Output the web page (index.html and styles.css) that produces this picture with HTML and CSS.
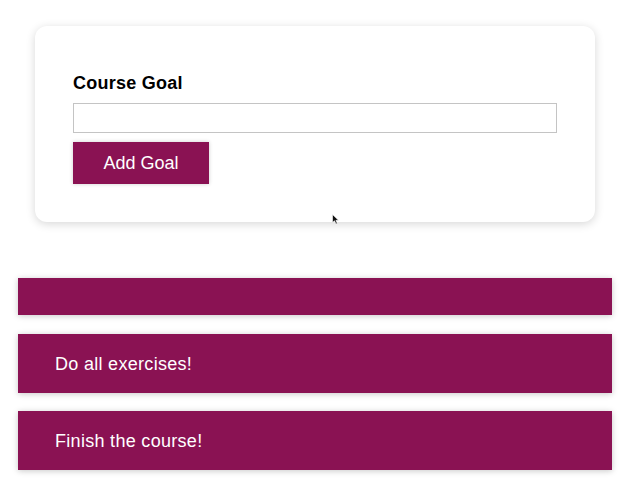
FILE: index.html
```html
<!DOCTYPE html>
<html>
<head>
<meta charset="utf-8">
<link rel="stylesheet" href="styles.css">
</head>
<body>
<section class="goal-form">
  <form class="form">
    <label class="form-label">Course Goal</label>
    <input class="form-input" type="text">
    <button class="button" type="button">Add Goal</button>
  </form>
</section>
<section class="goals">
  <ul class="goal-list">
    <li class="goal-item"></li>
    <li class="goal-item">Do all exercises!</li>
    <li class="goal-item">Finish the course!</li>
  </ul>
</section>
<svg class="cursor" width="8" height="11" viewBox="0 0 8 11"><path d="M0.5 0.5 L0.5 8.5 L2.5 6.8 L4 10 L5.3 9.4 L3.9 6.3 L6.5 6.3 Z" fill="#111" stroke="#fff" stroke-width="0.6"/></svg>
</body>
</html>
```
FILE: styles.css
```css
* { box-sizing: border-box; }
html, body { margin: 0; padding: 0; background: #fff; }
body {
  font-family: "Liberation Sans", Arial, sans-serif;
  position: relative;
  min-height: 481px;
}
.goal-form {
  width: 560px;
  margin: 26px 0 0 35px;
  padding: 47px 38px 38px;
  background: #fff;
  border-radius: 12px;
  box-shadow: 0 2px 10px rgba(0, 0, 0, 0.16);
}
.form { display: flex; flex-direction: column; align-items: flex-start; }
.form-label {
  font-weight: bold;
  font-size: 18px;
  line-height: 21px;
  letter-spacing: 0.25px;
  color: #000;
  margin-bottom: 9px;
}
.form-input {
  width: 100%;
  height: 30px;
  border: 1px solid #c4c4c4;
  font: inherit;
  margin: 0;
  padding: 0 6px;
}
.button {
  margin-top: 9px;
  width: 136px;
  height: 42px;
  border: none;
  background: #8a1253;
  color: #fff;
  font-family: "Liberation Sans", Arial, sans-serif;
  font-size: 18px;
  padding: 0;
  box-shadow: 0 0 4px rgba(0, 0, 0, 0.2);
}
.goals { margin: 56px 0 0 18px; width: 594px; }
.goal-list { list-style: none; margin: 0; padding: 0; display: flex; flex-direction: column; gap: 18.5px; }
.goal-item {
  background: #8a1253;
  color: #fff;
  font-size: 18px;
  line-height: 22px;
  letter-spacing: 0.3px;
  padding: 19px 37px 18px;
  min-height: 37px;
  box-shadow: 0 1px 6px rgba(0, 0, 0, 0.22);
}
.cursor { position: absolute; left: 332px; top: 214px; }
```
